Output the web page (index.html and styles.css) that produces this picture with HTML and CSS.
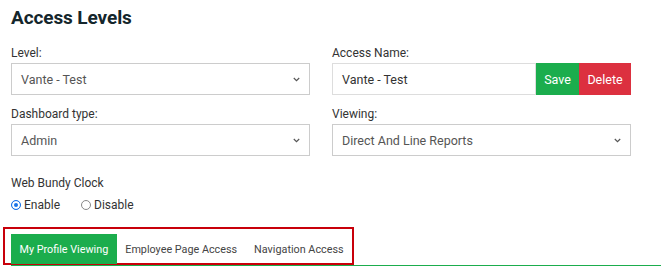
FILE: index.html
```html
<!DOCTYPE html>
<html lang="en">
<head>
  <meta charset="UTF-8">
  <meta name="viewport" content="width=device-width, initial-scale=1.0">
  <title>Access Levels</title>
  <link rel="stylesheet" href="styles.css">
</head>
<body>
  <div class="page">
    <h1 class="title">Access Levels</h1>

    <div class="row">
      <div class="field">
        <label>Level:</label>
        <div class="select">
          <span>Vante - Test</span>
          <svg class="chev" width="7" height="5" viewBox="0 0 7 5"><path d="M0.8 1l2.7 2.6 2.7-2.6" fill="none" stroke="#555" stroke-width="1.2"/></svg>
        </div>
      </div>
      <div class="field">
        <label>Access Name:</label>
        <div class="name-group">
          <div class="input">Vante - Test</div>
          <button class="btn save">Save</button>
          <button class="btn delete">Delete</button>
        </div>
      </div>
    </div>

    <div class="row">
      <div class="field">
        <label>Dashboard type:</label>
        <div class="select">
          <span>Admin</span>
          <svg class="chev" width="7" height="5" viewBox="0 0 7 5"><path d="M0.8 1l2.7 2.6 2.7-2.6" fill="none" stroke="#555" stroke-width="1.2"/></svg>
        </div>
      </div>
      <div class="field">
        <label>Viewing:</label>
        <div class="select">
          <span>Direct And Line Reports</span>
          <svg class="chev" width="7" height="5" viewBox="0 0 7 5"><path d="M0.8 1l2.7 2.6 2.7-2.6" fill="none" stroke="#555" stroke-width="1.2"/></svg>
        </div>
      </div>
    </div>

    <div class="bundy">
      <label>Web Bundy Clock</label>
      <div class="radios">
        <span class="radio"><span class="dot on"></span>Enable</span>
        <span class="radio"><span class="dot"></span>Disable</span>
      </div>
    </div>
  </div>

  <div class="tabs-wrap">
    <div class="tabs">
      <span class="tab active">My Profile Viewing</span>
      <span class="tab">Employee Page Access</span>
      <span class="tab">Navigation Access</span>
    </div>
    <div class="highlight"></div>
  </div>
</body>
</html>
```

FILE: styles.css
```css
*{
  margin: 0;
  padding: 0;
  box-sizing: border-box;
}
body{
  font-family: Roboto, "Liberation Sans", sans-serif;
  color: #333;
  background: #fff;
  width: 662px;
  height: 276px;
  overflow: hidden;
}
.page{
  padding: 0 11px;
}
.title{
  font-size: 19px;
  font-weight: 700;
  color: #14262c;
  padding-top: 6px;
  height: 46px;
  letter-spacing: -0.1px;
}
.row{
  display: grid;
  grid-template-columns: 299px 299px;
  column-gap: 22px;
  margin-bottom: 12px;
}
.field label{
  display: block;
  font-size: 12px;
  color: #333;
  height: 17px;
}
.select{
  height: 32px;
  border: 1px solid #ccc;
  display: flex;
  align-items: center;
  justify-content: space-between;
  padding: 0 9px 0 9px;
  font-size: 12.5px;
  color: #555;
}
.name-group{
  display: flex;
  height: 32px;
}
.input{
  flex: 1;
  border: 1px solid #ddd;
  display: flex;
  align-items: center;
  padding-left: 9px;
  font-size: 12.5px;
  color: #333;
}
.btn{
  border: none;
  color: #fff;
  font-family: inherit;
  font-size: 12.5px;
}
.save{
  width: 43px;
  background: #1bad4d;
}
.delete{
  width: 52px;
  background: #dc303f;
}
.bundy{
  padding-top: 8px;
}
.bundy label{
  display: block;
  font-size: 12px;
  height: 22px;
}
.radios{
  display: flex;
  gap: 21px;
  font-size: 12px;
  height: 14px;
}
.radio{
  display: flex;
  align-items: center;
  gap: 3px;
}
.dot{
  width: 10px;
  height: 10px;
  border-radius: 50%;
  border: 1px solid #888;
}
.dot.on{
  border-color: #1a73e8;
  background: #1a73e8;
  box-shadow: inset 0 0 0 2px #fff;
}
.tabs-wrap{
  margin-top: 15px;
}
.tabs{
  display: inline-flex;
  margin-left: 3px;
  border: 2px solid #c8000a;
  padding: 5px 0 0 6px;
  height: 38px;
  position: relative;
  z-index: 1;
}
.tab{
  height: 30px;
  display: flex;
  align-items: center;
  padding: 0 8.5px;
  font-size: 10.8px;
  color: #444;
}
.tab.active{
  background: #1bad4d;
  color: #fff;
}
.highlight{
  height: 1px;
  background: #1bad4d;
  margin: 0 1px 0 11px;
}
```
